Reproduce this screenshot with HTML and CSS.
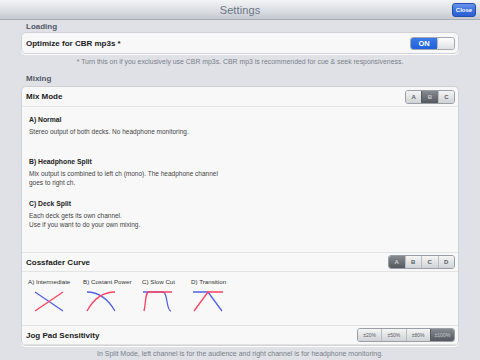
FILE: index.html
```html
<!DOCTYPE html>
<html>
<head>
<meta charset="utf-8">
<link rel="stylesheet" href="styles.css">
</head>
<body>
<header class="topbar">
  <div class="title">Settings</div>
  <button class="close">Close</button>
</header>
<main class="content">
  <div class="section-label">Loading</div>
  <div class="card">
    <div class="row row-toggle">
      <span class="row-title">Optimize for CBR mp3s *</span>
      <div class="toggle"><span class="on">ON</span><span class="off"></span></div>
    </div>
  </div>
  <div class="note">* Turn this on if you exclusively use CBR mp3s. CBR mp3 is recommended for cue &amp; seek responsiveness.</div>
  <div class="section-label section-mixing">Mixing</div>
  <div class="card card-mix">
    <div class="row">
      <span class="row-title">Mix Mode</span>
      <div class="seg seg-mix"><span>A</span><span class="sel">B</span><span>C</span></div>
    </div>
    <div class="mix-body">
      <div class="mode">
        <div class="mode-title">A) Normal</div>
        <div class="mode-desc">Stereo output of both decks. No headphone monitoring.</div>
      </div>
      <div class="mode">
        <div class="mode-title">B) Headphone Split</div>
        <div class="mode-desc">Mix output is combined to left ch (mono). The headphone channel<br>goes to right ch.</div>
      </div>
      <div class="mode">
        <div class="mode-title">C) Deck Split</div>
        <div class="mode-desc">Each deck gets its own channel.<br>Use if you want to do your own mixing.</div>
      </div>
    </div>
    <div class="row row-sep">
      <span class="row-title">Cossfader Curve</span>
      <div class="seg seg-curve"><span class="sel">A</span><span>B</span><span>C</span><span>D</span></div>
    </div>
    <div class="curves">
      <div class="curve c-a">
        <div class="curve-label">A) Intermediate</div>
        <svg width="31" height="21" viewBox="0 0 31 21">
          <path class="blue" d="M1 1 L29 20"/>
          <path class="red" d="M1 20 L29 1"/>
        </svg>
      </div>
      <div class="curve c-b">
        <div class="curve-label">B) Costant Power</div>
        <svg width="31" height="21" viewBox="0 0 31 21">
          <path class="blue" d="M1 1 C 12 1, 22 8, 29 20"/>
          <path class="red" d="M1 20 C 7 9, 16 1, 29 1"/>
        </svg>
      </div>
      <div class="curve c-c">
        <div class="curve-label">C) Slow Cut</div>
        <svg width="31" height="21" viewBox="0 0 31 21">
          <path class="blue" d="M1 1 L21 1 C 26 1, 24 20, 29 20"/>
          <path class="red" d="M2 20 C 4 12, 3 1, 7 1 L30 1"/>
        </svg>
      </div>
      <div class="curve c-d">
        <div class="curve-label">D) Transition</div>
        <svg width="31" height="21" viewBox="0 0 31 21">
          <path class="blue" d="M0 1 L15 1 L29 20"/>
          <path class="red" d="M1 20 L15 1 L30 1"/>
        </svg>
      </div>
    </div>
    <div class="row row-sep">
      <span class="row-title">Jog Pad Sensitivity</span>
      <div class="seg seg-jog"><span>±20%</span><span>±50%</span><span>±80%</span><span class="sel">±100%</span></div>
    </div>
  </div>
  <div class="footer-note">In Split Mode, left channel is for the audience and right channel is for headphone monitoring.</div>
</main>
</body>
</html>
```

FILE: styles.css
```css
* { box-sizing: border-box; }
html, body { margin: 0; padding: 0; }
body {
  width: 480px;
  height: 360px;
  overflow: hidden;
  background: #dfe1e6;
  font-family: "Liberation Sans", Arial, sans-serif;
}
.topbar {
  height: 20px;
  display: flex;
  align-items: center;
  justify-content: center;
  position: relative;
  background: linear-gradient(#f3f4f6, #d9dce1 60%, #c5c9d0);
  border-bottom: 1px solid #a9adb5;
}
.title {
  font-size: 11px;
  color: #6d7586;
  letter-spacing: 0.1px;
}
.close {
  position: absolute;
  right: 4px;
  top: 3px;
  height: 14px;
  width: 24px;
  padding: 0;
  border: 1px solid #2550b0;
  border-radius: 3px;
  background: linear-gradient(#6b95ea, #3a6fdc 50%, #2c5fd0);
  color: #fff;
  font-family: "Liberation Sans", Arial, sans-serif;
  font-weight: bold;
  font-size: 6px;
}
.content {
  padding: 0 21px;
  display: flex;
  flex-direction: column;
}
.section-label {
  height: 12px;
  padding-left: 5px;
  font-size: 8px;
  font-weight: bold;
  color: #505866;
  display: flex;
  align-items: center;
}
.section-mixing { height: 18px; padding-top: 2px; }
.card {
  background: #f8f8f8;
  border: 1px solid #cfd1d6;
  border-radius: 5px;
  box-shadow: 0 1px 0 #ffffff;
}
.row {
  height: 20px;
  display: flex;
  align-items: center;
  justify-content: space-between;
  padding: 0 3px 0 4px;
}
.row-title {
  font-size: 8px;
  font-weight: bold;
  color: #1a1a1a;
}
.toggle {
  display: flex;
  height: 13px;
  width: 45px;
  border: 1px solid #a4a8ae;
  border-radius: 3px;
  overflow: hidden;
}
.toggle .on {
  width: 26px;
  background: linear-gradient(#3c7ae8, #1f62dc);
  color: #fff;
  font-size: 7.5px;
  font-weight: bold;
  display: flex;
  align-items: center;
  justify-content: center;
}
.toggle .off {
  flex: 1;
  background: linear-gradient(#ffffff, #dfe0e2);
  border-left: 1px solid #b7b9bd;
  border-radius: 2px;
}
.note {
  height: 14px;
  font-size: 6.9px;
  color: #7a808a;
  text-align: center;
  display: flex;
  align-items: center;
  justify-content: center;
}
.card-mix { height: 260px; display: flex; flex-direction: column; }
.card-mix > .row:first-child { border-bottom: 1px solid #e3e3e3; box-shadow: 0 1px 0 #fbfbfb; }
.row-sep { border-top: 1px solid #e3e3e3; border-bottom: 1px solid #e3e3e3; }
.mix-body {
  height: 145px;
  padding: 5px 0 0 7px;
  display: flex;
  flex-direction: column;
}
.mode { height: 42px; }
.mode-title {
  font-size: 6.8px;
  font-weight: bold;
  color: #222;
  height: 14px;
  display: flex;
  align-items: center;
}
.mode-desc {
  font-size: 6.5px;
  color: #444;
  line-height: 8.5px;
  margin-top: 2px;
}
.seg {
  display: flex;
  height: 14px;
  border: 1px solid #9a9ea5;
  border-radius: 3px;
  overflow: hidden;
}
.seg span {
  flex: 1;
  display: flex;
  align-items: center;
  justify-content: center;
  background: linear-gradient(#f5f5f5, #d0d2d5);
  color: #5a5e66;
  font-size: 6px;
  font-weight: bold;
  border-left: 1px solid #b9bcc1;
}
.seg span:first-child { border-left: none; }
.seg span.sel {
  background: linear-gradient(#868a91, #55595f);
  color: #c8cbd0;
  border-left-color: #55595f;
}
.seg-mix { width: 50px; }
.seg-curve { width: 67px; }
.seg-jog { width: 98px; }
.seg-jog span { font-size: 5px; font-weight: normal; }
.curves {
  height: 53px;
  display: flex;
  padding: 6px 0 0 6px;
}
.curve { display: flex; flex-direction: column; }
.c-a { width: 55px; }
.c-b { width: 59px; }
.c-c { width: 49px; }
.c-d { width: 50px; }
.curve-label {
  font-size: 6.2px;
  color: #333;
  height: 10px;
  white-space: nowrap;
}
.curve svg { display: block; margin-top: 3px; }
.c-a svg { margin-left: 6px; }
.c-b svg { margin-left: 3px; }
.c-c svg { margin-left: 0px; }
.c-d svg { margin-left: 2px; }
.curve path { fill: none; stroke-width: 1.3; }
.curve .red { stroke: #ff4261; }
.curve .blue { stroke: #5361e6; }
.footer-note {
  height: 14px;
  font-size: 7px;
  color: #7a808a;
  text-align: center;
  display: flex;
  align-items: center;
  justify-content: center;
}
```
